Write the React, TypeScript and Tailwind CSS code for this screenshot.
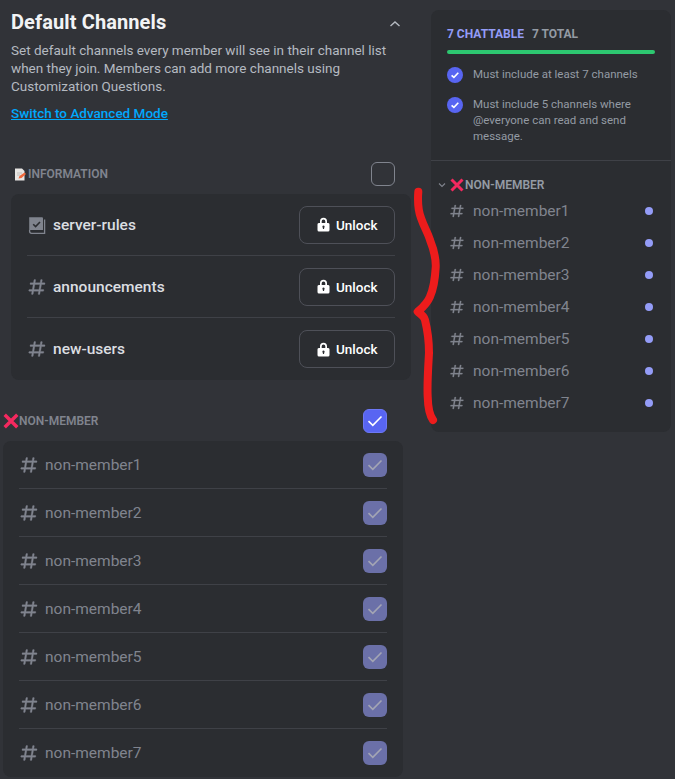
const HASH = "M5.88657 21C5.57547 21 5.3399 20.7189 5.39427 20.4126L6.00001 17H2.59511C2.28449 17 2.04905 16.7198 2.10259 16.4138L2.27759 15.4138C2.31946 15.1746 2.52722 15 2.77011 15H6.35001L7.41001 9H4.00511C3.69449 9 3.45905 8.71977 3.51259 8.41381L3.68759 7.41381C3.72946 7.17456 3.93722 7 4.18011 7H7.76001L8.39677 3.41262C8.43914 3.17391 8.64664 3 8.88907 3H9.87344C10.1845 3 10.4201 3.28107 10.3657 3.58738L9.76001 7H15.76L16.3968 3.41262C16.4391 3.17391 16.6466 3 16.8891 3H17.8734C18.1845 3 18.4201 3.28107 18.3657 3.58738L17.76 7H21.1649C21.4755 7 21.711 7.28023 21.6574 7.58619L21.4824 8.58619C21.4406 8.82544 21.2328 9 20.9899 9H17.41L16.35 15H19.7549C20.0655 15 20.301 15.2802 20.2474 15.5862L20.0724 16.5862C20.0306 16.8254 19.8228 17 19.5799 17H16L15.3632 20.5874C15.3209 20.8261 15.1134 21 14.8709 21H13.8866C13.5755 21 13.3399 20.7189 13.3943 20.4126L14 17H8.00001L7.36325 20.5874C7.32088 20.8261 7.11337 21 6.87094 21H5.88657ZM9.41045 9L8.35045 15H14.3504L15.4104 9H9.41045Z";

function Hash({ size }: { size: number }) {
  return (
    <svg width={size} height={size} viewBox="0 0 24 24" className="shrink-0">
      <path d={HASH} fill="#80848e" stroke="#80848e" strokeWidth="0.4" fillRule="evenodd" />
    </svg>
  );
}

function RulesIcon() {
  return (
    <svg width="20" height="20" viewBox="0 0 20 20" className="mt-[2px] shrink-0">
      <path d="M2.2 1.2h12.8a1 1 0 0 1 1 1V14H2.2z" fill="#80848e" />
      <path d="M2.6 14v1.2c0 1.2.9 2.1 2 2.1h13V3.5" fill="none" stroke="#80848e" strokeWidth="1.3" />
      <path d="M6.2 8.2l2.4 2.4 4.4-4.6" fill="none" stroke="#2b2d31" strokeWidth="1.6" />
    </svg>
  );
}

function Lock() {
  return (
    <svg width="13" height="15" viewBox="0 0 13 15" className="shrink-0">
      <path
        d="M3 6V4.2a3.5 3.5 0 0 1 7 0V6h.5A1.5 1.5 0 0 1 12.5 7.5v5.5a1.5 1.5 0 0 1-1.5 1.5H2a1.5 1.5 0 0 1-1.5-1.5V7.5A1.5 1.5 0 0 1 2.5 6zM4.7 6h3.6V4.2a1.8 1.8 0 0 0-3.6 0zM6.5 8.6a1.2 1.2 0 0 0-.6 2.2V12h1.2v-1.2A1.2 1.2 0 0 0 6.5 8.6z"
        fill="#ffffff"
        fillRule="evenodd"
      />
    </svg>
  );
}

function Cross({ size }: { size: number }) {
  return (
    <svg width={size} height={size} viewBox="0 0 14 14" className="shrink-0">
      <path d="M1.5 1.5l11 11M12.5 1.5l-11 11" stroke="#f4295f" strokeWidth="3" strokeLinecap="butt" />
    </svg>
  );
}

function Memo() {
  return (
    <svg width="13" height="13" viewBox="0 0 13 13" className="shrink-0">
      <path d="M1 0.5h7l2.5 2.5v9.5H1z" fill="#e8e6e3" />
      <path d="M3 5h5M3 7h3" stroke="#b9b5b0" strokeWidth="0.8" />
      <path d="M4.5 10.5l1-2.5 5-3.5 1.5 1.5-4.5 4z" fill="#f0683c" />
    </svg>
  );
}

function Checkbox({ state }: { state: "empty" | "on" | "dim" }) {
  if (state === "empty") {
    return <div className="h-6 w-6 shrink-0 rounded-md border border-[#80848e]" />;
  }
  const on = state === "on";
  return (
    <div
      className={
        on
          ? "flex h-6 w-6 shrink-0 items-center justify-center rounded-md border border-[#6d78f5] bg-[#5865f2]"
          : "flex h-6 w-6 shrink-0 items-center justify-center rounded-md bg-[#6b70a8]"
      }
    >
      <svg width="16" height="12" viewBox="0 0 16 12">
        <path
          d="M1.5 6.2l4.3 4.1L14.5 1.5"
          fill="none"
          stroke={on ? "#ffffff" : "#a3a5b4"}
          strokeWidth="1.6"
        />
      </svg>
    </div>
  );
}

function Unlock() {
  return (
    <div className="flex h-[38px] w-24 shrink-0 items-center gap-[6px] rounded-lg border border-[#4e5058] pl-[17px] text-[13.5px] font-medium text-white">
      <Lock />
      <span className="pt-[1px]">Unlock</span>
    </div>
  );
}

function RuleItem({ children }: { children: React.ReactNode }) {
  return (
    <div className="flex gap-[10px]">
      <svg width="16" height="16" viewBox="0 0 16 16" className="mt-[1px] shrink-0">
        <circle cx="8" cy="8" r="8" fill="#5865f2" />
        <path d="M4.6 8.3l2.3 2.1 4.4-4.6" fill="none" stroke="#ffffff" strokeWidth="1.6" />
      </svg>
      <p className="text-[11.5px] leading-4 text-[#949ba4]">{children}</p>
    </div>
  );
}

const members = [1, 2, 3, 4, 5, 6, 7];
const locked = ["server-rules", "announcements", "new-users"];

export default function App() {
  return (
    <div
      className="relative flex h-[779px] overflow-hidden bg-[#313338]"
      style={{ fontFamily: "Roboto, sans-serif" }}
    >
      <main className="w-[411px] shrink-0 pl-[11px]">
        <div className="flex items-center justify-between pt-[9px] pr-4">
          <h2 className="text-xl leading-[26px] font-bold tracking-[0.1px] text-[#f2f3f5]">
            Default Channels
          </h2>
          <svg width="16" height="16" viewBox="0 0 16 16" className="mt-1 mr-[-8px]">
            <path d="M3.5 10l4.5-4 4.5 4" fill="none" stroke="#b5bac1" strokeWidth="1.4" />
          </svg>
        </div>
        <p className="mt-[6px] w-[390px] text-[13.5px] leading-[18px] text-[#b5bac1]">
          Set default channels every member will see in their channel list when they join. Members
          can add more channels using Customization Questions.
        </p>
        <a className="mt-[9px] inline-block text-[13.5px] leading-[18px] font-medium text-[#00a8fc] underline">
          Switch to Advanced Mode
        </a>

        <div className="mt-[37px] flex h-6 items-center justify-between pr-4">
          <div className="flex items-center gap-[1px] pl-[3px]">
            <Memo />
            <span className="text-xs font-semibold text-[#80848e] uppercase">Information</span>
          </div>
          <Checkbox state="empty" />
        </div>
        <section className="mt-2 rounded-lg bg-[#2b2d31] px-4">
          {locked.map((name, i) => (
            <div
              key={name}
              className={
                i < 2
                  ? "flex h-[62px] items-center border-b border-[#3f4147]"
                  : "flex h-[62px] items-center"
              }
            >
              {i === 0 ? <RulesIcon /> : <Hash size={20} />}
              <span className="ml-[6px] flex-1 pt-[2px] text-[15.5px] font-medium text-[#dbdee1]">
                {name}
              </span>
              <Unlock />
            </div>
          ))}
        </section>

        <div className="mt-[29px] -ml-2 flex h-6 items-center justify-between pr-6">
          <div className="flex items-center">
            <Cross size={16} />
            <span className="text-xs font-semibold text-[#80848e] uppercase">Non-member</span>
          </div>
          <Checkbox state="on" />
        </div>
        <section className="mt-2 -ml-2 w-[400px] rounded-lg bg-[#2b2d31] px-4">
          {members.map((n) => (
            <div
              key={n}
              className={
                n < 7
                  ? "flex h-12 items-center border-b border-[#3f4147]"
                  : "flex h-12 items-center"
              }
            >
              <Hash size={20} />
              <span className="ml-[6px] flex-1 pt-[2px] text-[15.5px] text-[#80848e]">
                non-member{n}
              </span>
              <Checkbox state="dim" />
            </div>
          ))}
        </section>
      </main>

      <aside className="mt-[10px] ml-5 h-[422px] w-60 rounded-lg bg-[#2b2d31]">
        <div className="h-[151px] border-b border-[#3f4147] px-4 pt-4 pb-4">
          <div className="flex gap-2 text-xs leading-4 font-bold">
            <span className="text-[#949cf7]">7 CHATTABLE</span>
            <span className="text-[#949ba4]">7 TOTAL</span>
          </div>
          <div className="mt-[8px] h-1 w-full rounded-sm bg-[#2dc770]" />
          <div className="mt-[12px] flex flex-col gap-[13px]">
            <RuleItem>Must include at least 7 channels</RuleItem>
            <RuleItem>Must include 5 channels where @everyone can read and send message.</RuleItem>
          </div>
        </div>
        <div className="mt-[16px] flex h-[16px] items-center pl-[6px]">
          <svg width="10" height="10" viewBox="0 0 10 10" className="mr-[3px]">
            <path d="M2 3.5l3 3 3-3" fill="none" stroke="#80848e" strokeWidth="1.1" />
          </svg>
          <Cross size={14} />
          <span className="ml-[1px] text-xs font-semibold text-[#949ba4] uppercase">Non-member</span>
        </div>
        <div className="mt-[2px] flex flex-col">
          {members.map((n) => (
            <div key={n} className="flex h-8 items-center px-[18px]">
              <Hash size={16} />
              <span className="ml-[8px] flex-1 pt-[2px] text-[15.5px] text-[#80848e]">
                non-member{n}
              </span>
              <span className="h-2 w-2 rounded-full bg-[#949cf7]" />
            </div>
          ))}
        </div>
      </aside>

      <svg
        width="60"
        height="250"
        viewBox="0 0 60 250"
        className="pointer-events-none absolute top-[180px] left-[400px]"
      >
        <path
          d="M18.3 11.7C17.5 22 18 30 21 38 C24 47 28 53 30 60 C34 70 36 78 35.7 87 C35 100 33 110 30 116.7 C27 124 22 128 17.7 131.7 C21 134 24 136 25 140 C28 152 29 163 29 173 C28 190 27 205 27.7 216.7 C28 228 30 236 33 240"
          fill="none"
          stroke="#ed1c1c"
          strokeWidth="8"
          strokeLinecap="round"
          strokeLinejoin="round"
        />
      </svg>
    </div>
  );
}
